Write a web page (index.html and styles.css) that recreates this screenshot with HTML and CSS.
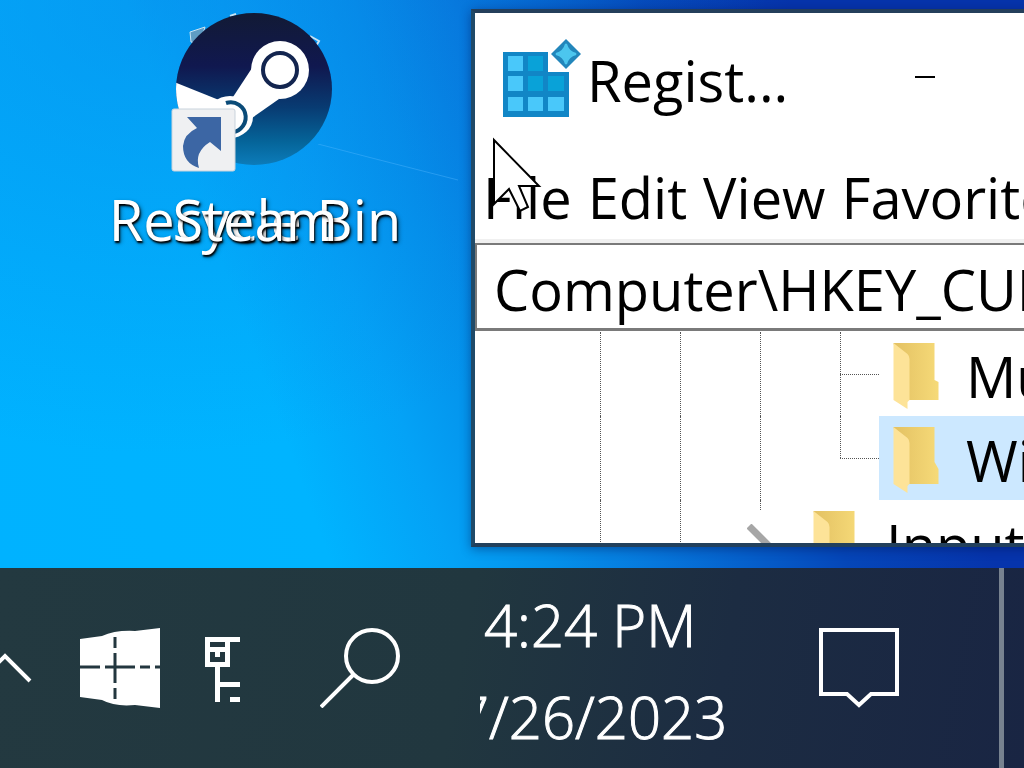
FILE: index.html
```html
<!DOCTYPE html>
<html lang="en">
<head>
  <meta charset="UTF-8">
  <title>Desktop</title>
  <link rel="stylesheet" href="styles.css">
</head>
<body>

  <main class="desktop">
    <svg class="light-ray" viewBox="0 0 160 40" aria-hidden="true">
      <path d="M0 0 L50 13 L140 36" fill="none" stroke="#58baff" stroke-width="1" opacity=".4"/>
    </svg>

    <div class="shortcuts">
      <div class="shortcut">
        <svg class="shortcut-icon" viewBox="170 12 170 160" aria-hidden="true">
          <path d="M190 32 L205 27 L200 44 L191 42 Z" fill="#5f9cc4" stroke="#c8e4f5"/>
          <path d="M230 16 L236 14 M310 36 L319 41 L316 46" fill="none" stroke="#c8e4f5" stroke-width="2"/>
        </svg>
        <span class="shortcut-label">Recycle Bin</span>
      </div>
      <div class="shortcut">
        <svg class="shortcut-icon" viewBox="170 12 170 160" aria-hidden="true">
          <defs>
            <linearGradient id="steam" x1="0" y1="0" x2="0" y2="1">
              <stop offset="0" stop-color="#121a35"/>
              <stop offset=".35" stop-color="#10184f"/>
              <stop offset=".62" stop-color="#083b72"/>
              <stop offset=".85" stop-color="#05659a"/>
              <stop offset="1" stop-color="#0c7cba"/>
            </linearGradient>
            <clipPath id="disc"><ellipse cx="254" cy="89" rx="78" ry="76"/></clipPath>
          </defs>
          <ellipse cx="254" cy="89" rx="78" ry="76" fill="url(#steam)"/>
          <g clip-path="url(#disc)" fill="#fff">
            <path d="M174 82 L219 100 L222 138 L174 120 Z"/>
            <path d="M252 68 L233 97 L252 118 L279 99 Z"/>
            <circle cx="280" cy="70" r="29"/>
            <ellipse cx="230" cy="117" rx="23" ry="21"/>
          </g>
          <circle cx="280" cy="70" r="17" fill="none" stroke="#13254f" stroke-width="4"/>
          <path d="M226 103 A15 15 0 1 1 228 132" fill="none" stroke="#0a4b78" stroke-width="4"/>
          <rect x="172" y="109" width="63" height="62" rx="2" fill="#eff0f2" stroke="#c9d3dc"/>
          <path d="M187 117 H221 V151 L210 142 Q194 152 199 168 Q183 163 183 146 Q184 134 197 128 Z" fill="#3c66a4"/>
        </svg>
        <span class="shortcut-label">Steam</span>
      </div>
    </div>

    <section class="window">
      <header class="title-bar">
        <svg class="app-icon" viewBox="0 0 80 80" aria-hidden="true">
          <path d="M0 15 H45 V35 H66 V80 H0 Z" fill="#1186c6"/>
          <g fill="#49c8fa">
            <path d="M5 19 h15 v15 h-15 Z M5 39 h15 v15 h-15 Z M5 60 h15 v14 h-15 Z M25 60 h15 v14 h-15 Z M45 60 h16 v14 h-16 Z"/>
          </g>
          <path d="M25 19 h15 v15 h-15 Z M25 39 h15 v15 h-15 Z M45 39 h16 v15 h-16 Z" fill="#09a2d8"/>
          <path d="M63 2 L78 17 L63 32 L48 17 Z" fill="#2286bb"/>
          <path d="M63 7 Q65 15 73 17 Q65 19 63 27 Q61 19 53 17 Q61 15 63 7 Z" fill="#4cc6ee" stroke="#4cc6ee" stroke-width="2"/>
        </svg>
        <h1 class="title">Regist...</h1>
        <button class="minimize" type="button" aria-label="Minimize"></button>
      </header>
      <nav class="menu">
        <button type="button">File</button>
        <button type="button">Edit</button>
        <button type="button">View</button>
        <button type="button">Favorites</button>
        <button type="button">Help</button>
      </nav>
      <input class="address" type="text" aria-label="Address" value="Computer\HKEY_CURRENT_USER">
      <ul class="tree">
        <li class="row">
          <i class="line"></i><i class="line"></i><i class="line"></i><i class="line branch"></i>
          <span class="key">
            <svg class="folder" viewBox="0 0 47 68" aria-hidden="true">
              <defs>
                <linearGradient id="folder-back" x1="0" y1="0" x2="1" y2="0">
                  <stop offset="0" stop-color="#e3c163"/>
                  <stop offset="1" stop-color="#f6da78"/>
                </linearGradient>
              </defs>
              <path d="M1 1 H42 V38 L46 40 V58 H12 Z" fill="url(#folder-back)"/>
              <path d="M1 1 L15 12 Q17 14 17 17 V58 L15 60 V67 L1 58 Z" fill="#fde398"/>
            </svg>
            MuiCached
          </span>
        </li>
        <li class="row">
          <i class="line"></i><i class="line"></i><i class="line"></i><i class="line branch last"></i>
          <span class="key selected">
            <svg class="folder" viewBox="0 0 47 68" aria-hidden="true">
              <path d="M1 1 H42 V36 L46 43 V58 H12 Z" fill="url(#folder-back)"/>
              <path d="M1 1 L15 12 Q17 14 17 17 V58 L15 60 V67 L1 58 Z" fill="#fde398"/>
            </svg>
            WindowMetrics
          </span>
        </li>
        <li class="row">
          <i class="line"></i><i class="line"></i>
          <i class="line closed">
            <svg class="expander" viewBox="0 0 30 44" aria-hidden="true">
              <path d="M2 2 L22 22 L2 42" fill="none" stroke="#a6a6a6" stroke-width="7"/>
            </svg>
          </i>
          <span class="key">
            <svg class="folder" viewBox="0 0 47 68" aria-hidden="true">
              <path d="M1 1 H42 V38 L46 40 V58 H12 Z" fill="url(#folder-back)"/>
              <path d="M1 1 L15 12 Q17 14 17 17 V58 L15 60 V67 L1 58 Z" fill="#fde398"/>
            </svg>
            Input Method
          </span>
        </li>
      </ul>
    </section>

    <svg class="cursor" viewBox="0 0 50 76" aria-hidden="true">
      <path d="M2 3 L47 49 H27 L36 70 L28 74 L17 52 L2 67 Z" fill="#fff" stroke="#000" stroke-width="2"/>
    </svg>
  </main>

  <footer class="taskbar">
    <button class="tray-more" type="button" aria-label="Show hidden icons">
      <svg width="40" height="40" viewBox="0 0 40 40"><path d="M-20 33 L5 8 L30 33" fill="none" stroke="#fff" stroke-width="4"/></svg>
    </button>
    <button class="task" type="button" aria-label="Start">
      <svg width="80" height="80" viewBox="0 0 80 80">
        <path d="M0 11 L22 8 Q35 2 55 3 L80 0 V80 L55 77 Q35 79 22 72 L0 69 Z" fill="#fff"/>
        <path d="M0 39 H20 M25 39 H55 M60 39 H70 M75 39 H80 M35 9 V20 M35 25 V55 M35 60 V71" fill="none" stroke="#23373f" stroke-width="3"/>
      </svg>
    </button>
    <button class="tray-key" type="button" aria-label="Keyboard">
      <svg width="36" height="66" viewBox="0 0 36 66">
        <path d="M0 0 H35 V5 H25 V30 H15 V45 H35 V50 H15 V65 H10 V30 H0 Z M25 60 H35 V65 H25 Z" fill="#fff"/>
        <path d="M5 5 H20 V10 H5 Z M5 15 H10 V20 H15 V15 H20 V25 H5 Z" fill="#23373f"/>
      </svg>
    </button>
    <button class="task" type="button" aria-label="Search">
      <svg width="80" height="80" viewBox="0 0 80 80">
        <path d="M1 79 L34 46" fill="none" stroke="#fff" stroke-width="4"/>
        <circle cx="52" cy="28" r="26" fill="none" stroke="#fff" stroke-width="4"/>
      </svg>
    </button>
    <div class="clock">
      <time class="time">4:24 PM</time>
      <time class="date">7/26/2023</time>
    </div>
    <button class="task" type="button" aria-label="Notifications">
      <svg width="80" height="80" viewBox="0 0 80 80">
        <path d="M2 2 H78 V66 H52 L40 77 L28 66 H2 Z" fill="none" stroke="#fff" stroke-width="4"/>
      </svg>
    </button>
    <button class="show-desktop" type="button" aria-label="Show desktop"></button>
  </footer>

</body>
</html>
```
FILE: styles.css
```css
* {
  box-sizing: border-box;
}
body {
  margin: 0;
  height: 100vh;
  display: flex;
  flex-direction: column;
  overflow: hidden;
  font-family: "Open Sans", "Noto Sans", sans-serif;
  font-size: 56px;
  line-height: 84px;
}
button {
  padding: 0;
  border: 0;
  background: none;
  color: inherit;
  font: inherit;
}
svg {
  display: block;
  flex: none;
}

/* desktop */
.desktop {
  position: relative;
  flex: 1;
  min-height: 0;
  overflow: hidden;
  background:
    radial-gradient(ellipse 60% 80% at 15% 0%, rgba(10, 130, 230, .5), rgba(10, 130, 230, 0)),
    linear-gradient(70deg, #00b2ff 0%, #00b4ff 27%, #04a2f6 37%, #0490ea 45%, #0678dc 53%, #055fcb 61%, #0546b8 69%, #0634ac 81%);
}
.light-ray {
  position: absolute;
  left: 318px;
  top: 144px;
  width: 160px;
}
.shortcuts {
  display: grid;
  width: 340px;
  margin-left: 85px;
  padding-top: 12px;
}
.shortcut {
  grid-area: 1 / 1;
  display: flex;
  flex-direction: column;
  align-items: center;
  gap: 5px;
}
.shortcut-icon {
  width: 170px;
  height: 160px;
}
.shortcut-label {
  color: #fff;
  text-shadow: 1px 2px 2px #000, 2px 2px 4px rgba(0, 0, 0, .4);
  white-space: nowrap;
}

/* registry editor */
.window {
  position: absolute;
  left: 471px;
  right: -240px;
  top: 9px;
  bottom: 21px;
  display: flex;
  flex-direction: column;
  border: 4px solid #204a68;
  border-top-color: #243f5b;
  border-bottom-color: #22405c;
  background: #fff;
  color: #000;
  box-shadow: 0 2px 10px rgba(0, 20, 80, .45);
  overflow: hidden;
}
.title-bar {
  display: flex;
  align-items: center;
  height: 144px;
  padding: 0 28px;
  flex: none;
}
.app-icon {
  width: 80px;
  height: 80px;
  margin-bottom: 16px;
}
.title {
  width: 320px;
  margin: 0 0 10px 4px;
  font-size: 56px;
  font-weight: normal;
}
.minimize {
  width: 20px;
  height: 2px;
  margin-bottom: 16px;
  margin-left: 8px;
  background: #000;
}
.menu {
  display: flex;
  flex: none;
  gap: 16px;
  padding: 0 8px 2px;
  border-bottom: 4px solid #f0f0f0;
  height: 86px;
}
.menu button {
  height: 80px;
  line-height: 80px;
}
.address {
  flex: none;
  width: 100%;
  height: 88px;
  padding: 4px 17px 0;
  border: 2px solid #7a7a7a;
  border-bottom-width: 3px;
  font: inherit;
  color: #000;
  outline: 0;
}
.tree {
  flex: 1;
  min-height: 0;
  margin: 0;
  padding: 1px 0 0 84px;
  overflow: hidden;
  list-style: none;
}
.row {
  display: flex;
  height: 84px;
}
.line {
  flex: none;
  width: 80px;
  position: relative;
}
.line::before {
  content: "";
  position: absolute;
  left: 41px;
  top: 0;
  bottom: 0;
  border-left: 1px dotted #555;
}
.branch::after {
  content: "";
  position: absolute;
  left: 41px;
  right: 0;
  top: 42px;
  border-top: 1px dotted #555;
}
.last::before {
  bottom: 42px;
}
.closed::before {
  bottom: 74px;
}
.expander {
  width: 30px;
  height: 44px;
  margin: 24px 0 0 28px;
}
.key {
  display: flex;
  flex: 1;
  align-items: center;
  gap: 26px;
  padding: 4px 0 0 13px;
  white-space: nowrap;
}
.selected {
  background: #cce8ff;
}
.folder {
  width: 48px;
  height: 68px;
}
.cursor {
  position: absolute;
  left: 492px;
  top: 137px;
  width: 50px;
}

/* taskbar */
.taskbar {
  display: flex;
  align-items: center;
  flex: none;
  height: 200px;
  background: linear-gradient(100deg, #233940 0%, #21373f 45%, #1c2c42 70%, #192543 100%);
  color: #fff;
}
.tray-more {
  width: 40px;
}
.task {
  display: flex;
  justify-content: center;
  width: 160px;
}
.tray-key {
  width: 80px;
  padding: 4px 0 0 5px;
}
.clock {
  flex: 1;
  align-self: stretch;
  display: flex;
  flex-direction: column;
  gap: 8px;
  margin-left: 40px;
  padding: 15px 0;
  overflow: hidden;
  font-size: 58px;
  font-weight: 300;
  -webkit-text-stroke: 1px #fff;
  white-space: nowrap;
}
.time {
  margin-left: 4px;
}
.date {
  margin-left: -24px;
}
.show-desktop {
  align-self: stretch;
  width: 25px;
  margin-left: 60px;
  border-left: 5px solid #77828f;
}
```
